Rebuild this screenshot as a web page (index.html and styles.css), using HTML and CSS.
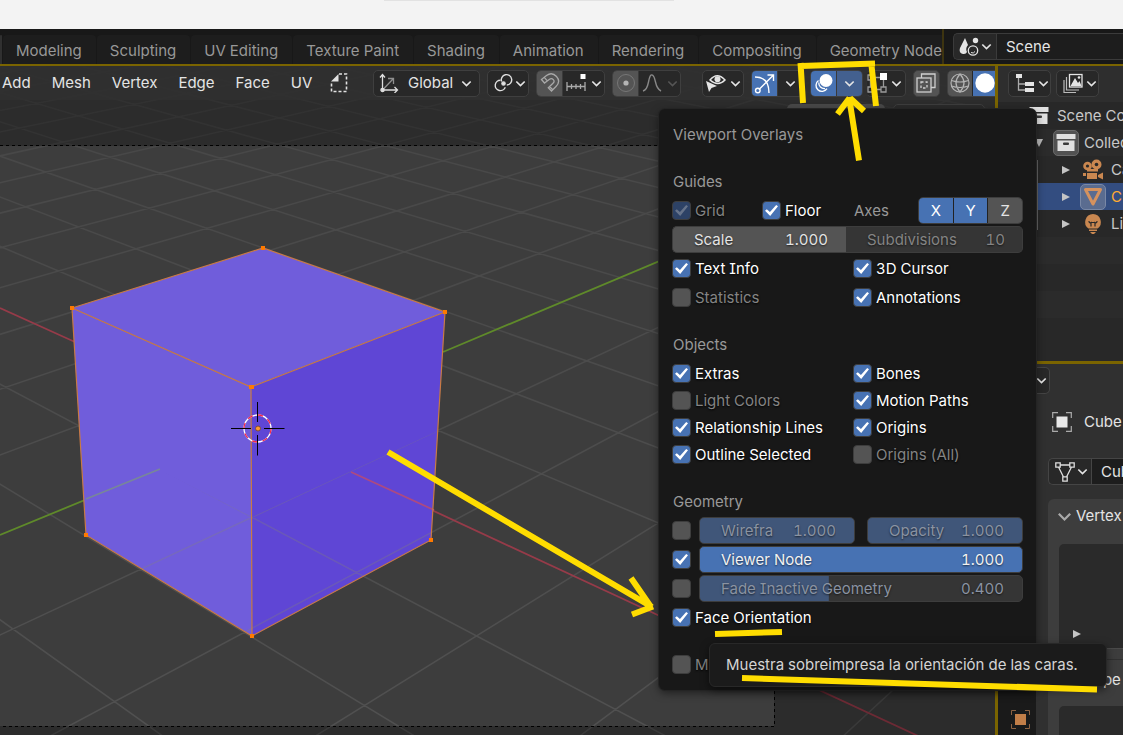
FILE: index.html
```html
<!DOCTYPE html>
<html lang="en">
<head>
<meta charset="utf-8">
<title>Viewport Overlays</title>
<link rel="stylesheet" href="styles.css">
</head>
<body>
<svg class="defs" width="0" height="0" aria-hidden="true">
  <symbol id="chev" viewBox="0 0 10 10"><path d="M1.2 3.2 5 7l3.800-3.800" fill="none" stroke="currentColor" stroke-width="1.500"/></symbol>
  <symbol id="box" viewBox="0 0 20 20"><path d="M0.500 1h19v5h-19z" fill="#e0e0e0"/><path d="M1.500 7.500h17V18h-17z" fill="#e0e0e0"/><rect x="7" y="9.500" width="6" height="2.500" rx="1" fill="#3a3a3a"/></symbol>
  <symbol id="right" viewBox="0 0 10 10"><path d="M1 1v8l8-4z" fill="#c4c4c4"/></symbol>
  <symbol id="down" viewBox="0 0 10 10"><path d="M1 1h8l-4 8z" fill="#b8b8b8"/></symbol>
</svg>

<div class="window-strip"><div class="strip-shadow"></div></div>

<header class="topbar">
  <nav class="tabs">
    <button class="tab active" aria-label="Layout"></button>
    <button class="tab">Modeling</button><button class="tab">Sculpting</button><button class="tab">UV Editing</button><button class="tab">Texture Paint</button><button class="tab">Shading</button><button class="tab">Animation</button><button class="tab">Rendering</button><button class="tab">Compositing</button><button class="tab">Geometry Nodes</button>
  </nav>
  <div class="scene">
    <button class="scene-icon" aria-label="Browse scene">
      <svg width="20" height="20" viewBox="0 0 20 20"><path d="M6 1 1 11q-1.500 5 3 6 3 .5 4-2-2-4 1-7z" fill="#e4e4e4"/><circle cx="16.500" cy="3.500" r="2.700" fill="#e4e4e4"/><circle cx="14" cy="13.500" r="4.700" fill="none" stroke="#e4e4e4" stroke-width="1.300"/><path d="M12 15.500q2.500 1.500 4-1" fill="none" stroke="#e4e4e4"/></svg>
      <svg width="11" height="11"><use href="#chev"/></svg>
    </button>
    <input class="scene-name" aria-label="Scene name" value="Scene">
  </div>
</header>

<main class="workspace">
  <section class="viewport">
    <svg class="canvas" width="100%" height="100%">
      <defs>
        <linearGradient id="fade" gradientUnits="userSpaceOnUse" x1="0" y1="0" x2="0" y2="660"><stop offset="0" stop-color="#fff" stop-opacity=".03"/><stop offset=".15" stop-color="#fff" stop-opacity=".06"/><stop offset="1" stop-color="#fff" stop-opacity=".1"/></linearGradient>
        <clipPath id="front"><path d="M-18 314 252 451 700 243V700H-18z"/></clipPath>
        <clipPath id="cubeclip"><path d="M72 242 263 182 445 246 431 474 252 570 86 469z"/></clipPath>
      </defs>
      <rect width="100%" height="100%" fill="#3d3d3d"/>
      <g id="floor" fill="none" stroke="url(#fade)" stroke-width="1.500"></g>
      <path d="M0 242 75 276M352 407 1000 708" stroke="#963b49" stroke-width="1.800"/>
      <path d="M0 469 160 403M443 286 700 178" stroke="#5f8a2a" stroke-width="1.800"/>
      <path d="M0 0H2000V2000H0V660H774V80H0z" fill="#000" fill-opacity=".28"/>
      <path d="M0 79.500H774.500V660.500H0" fill="none" stroke="#000" stroke-dasharray="3 3"/>
      <path d="M72 242 263 182 445 246 251 321z" fill="#705ddb"/>
      <path d="M72 242 251 321 252 570 86 469z" fill="#705ddb"/>
      <path d="M251 321 445 246 431 474 252 570z" fill="#5f46d5"/>
      <g clip-path="url(#cubeclip)"><g clip-path="url(#front)"><g id="floor-over" fill="none" stroke="#8a8a70" stroke-opacity=".28" stroke-width="1.500"></g></g></g>
      <path d="M86 433 160 403" stroke="#78869a" stroke-width="1.800"/>
      <path d="M351 406 434 444" stroke="#ad4a80" stroke-width="1.800"/>
      <path d="M72 242 263 182 445 246 431 474 252 570 86 469zM72 242 251 321 445 246M251 321 252 570" fill="none" stroke="#c87a45" stroke-width="1.200"/>
      <path d="M70 240h4v4h-4zM261 180h4v4h-4zM443 244h4v4h-4zM249 319h5v4h-5zM84 467h4v4h-4zM250 568h4v4h-4zM429 472h4v4h-4z" fill="#ff7a00"/>
      <circle cx="257.500" cy="362.500" r="13.500" fill="none" stroke="#fff" stroke-width="1.300"/>
      <circle cx="257.500" cy="362.500" r="13.500" fill="none" stroke="#f2274c" stroke-width="1.300" stroke-dasharray="5.300 5.300"/>
      <path d="M231 362.500h20M264 362.500h20.500M257.500 336v20M257.500 369v20.500" stroke="#000"/>
      <circle cx="258" cy="362.500" r="2.500" fill="#ff9a2c" stroke="#7a4a40"/>
    </svg>

    <div class="header">
      <div class="menus"><button>Add</button><button>Mesh</button><button>Vertex</button><button>Edge</button><button>Face</button><button>UV</button></div>
      <svg class="dash-icon" width="18" height="20" viewBox="0 0 18 20"><path d="M9 1h7.500v17.500h-15V9" fill="none" stroke="#e2e2e2" stroke-width="1.600" stroke-dasharray="3 2"/><path d="M8.500 1v7.500H1z" fill="#e2e2e2"/></svg>
      <button class="group g-global">
        <svg width="20" height="20" viewBox="0 0 20 20" fill="none" stroke="#dedede" stroke-width="1.300"><path d="M3.500 17V2M1 4.500 3.500 1.500 6 4.500M3.500 17H18M15.500 14l3 3-3 3"/><path d="M4 16.500 14 6M9 5.500h5.500v5.500" stroke="#8f8f8f"/><circle cx="3.500" cy="17" r="1.600" fill="#ddd"/></svg>
        <span>Global</span>
        <svg width="11" height="11"><use href="#chev"/></svg>
      </button>
      <button class="group g-pivot" aria-label="Pivot point">
        <svg width="20" height="20" viewBox="0 0 20 20" fill="none" stroke="#dedede" stroke-width="1.400"><path d="M7.500 7.200a5.200 5.200 0 1 0 4.800 7"/><path d="M8.600 8.500a5.200 5.200 0 1 1 5.200 3.500"/><circle cx="10.500" cy="10.500" r="1.600" fill="#e4e4e4"/></svg>
        <svg width="11" height="11"><use href="#chev"/></svg>
      </button>
      <div class="group g-snap">
        <button class="on-grey" aria-label="Snap"><svg width="20" height="20" viewBox="0 0 20 20" fill="none" stroke="#a8a8a8" stroke-width="1.300"><path d="M1.500 6.500 6.500 2.500Q12-1.500 16.500 3.500T16 13.500l-4.500 4.500-3.200-3.200 4.700-4.500q2-2 .3-3.700T9.500 6.200L4.500 10zM4.300 4.300l3 3.500M9.500 13.500l3.200 3.200"/></svg></button>
        <button class="part" aria-label="Snap options"><svg width="20" height="20" viewBox="0 0 20 20" fill="none" stroke="#aaa" stroke-width="1.300"><path d="M1 9v9M1 13.500h18M19 9v9M5.500 11v5M10 11v5M14.500 11v5"/><rect x="14.500" y="1" width="5" height="5" fill="#fff" stroke="none"/></svg><svg width="11" height="11"><use href="#chev"/></svg></button>
      </div>
      <div class="group g-prop">
        <button class="on-grey" aria-label="Proportional editing"><svg width="20" height="20" viewBox="0 0 20 20"><circle cx="10" cy="10" r="8.500" fill="none" stroke="#777"/><circle cx="10" cy="10" r="2.600" fill="#b4b4b4"/></svg></button>
        <button class="part dim" aria-label="Falloff"><svg width="20" height="20" viewBox="0 0 20 20" fill="none" stroke="#888" stroke-width="1.400"><path d="M1 18q4-1 5.500-9T10 2q2 0 3.500 7t5.500 9"/></svg><svg width="11" height="11"><use href="#chev"/></svg></button>
      </div>
      <button class="group g-eye" aria-label="Visibility">
        <svg width="22" height="20" viewBox="0 0 22 20"><path d="M5 7q7-8.500 15 0-7 7-15 0z" fill="none" stroke="#e4e4e4" stroke-width="1.500"/><circle cx="12.500" cy="6.200" r="3" fill="#e4e4e4"/><path d="M1 8l3 11 2.500-4L12 13z" fill="#e4e4e4"/></svg>
        <svg width="11" height="11"><use href="#chev"/></svg>
      </button>
      <div class="group g-gizmo">
        <button class="on-blue" aria-label="Gizmos"><svg width="21" height="21" viewBox="0 0 21 21" fill="none" stroke="#fff" stroke-width="1.400"><path d="M1 4q14 0 14 16M5 16.500 19 2.500M13.500 2H19.500V8"/><circle cx="3.800" cy="17.500" r="2.300"/></svg></button>
        <button class="part" aria-label="Gizmo options"><svg width="11" height="11"><use href="#chev"/></svg></button>
      </div>
      <div class="group g-overlay">
        <button class="on-blue" aria-label="Overlays"><svg width="21" height="21" viewBox="0 0 21 21"><circle cx="13" cy="7.500" r="6.500" fill="#fff"/><path d="M5.500 7.500a6 6 0 1 0 8.500 8.200" fill="none" stroke="#fff" stroke-width="1.400"/><path d="M5.800 9.500a5.500 5.500 0 0 0 6.200 6" fill="none" stroke="#fff" stroke-width="1.300"/></svg></button>
        <button class="part blue-dim" aria-label="Overlay options"><svg width="11" height="11"><use href="#chev"/></svg></button>
      </div>
      <button class="group g-mesh" aria-label="Mesh edit overlays">
        <svg width="20" height="20" viewBox="0 0 20 20" fill="none" stroke="#9a9a9a" stroke-width="1.300"><path d="M1 2h5v5H1zM1 14h5v5H1zM14 14h5v5h-5zM3.500 7v7M6 16.500h8M16.500 7v7M6 4.500h7"/><rect x="13" y="0" width="7" height="7" fill="#fff" stroke="none"/></svg>
        <svg width="11" height="11"><use href="#chev"/></svg>
      </button>
      <button class="group g-xray grey" aria-label="X-ray"><svg width="20" height="20" viewBox="0 0 20 20" fill="none" stroke="#cfcfcf" stroke-width="1.300"><path d="M5.500 5V1H19v13.500h-4"/><rect x="1" y="5" width="14" height="14"/><path d="M5 9h6v6H5z" stroke-dasharray="2.500 2"/></svg></button>
      <div class="group g-shade">
        <button class="on-grey" aria-label="Wireframe"><svg width="20" height="20" viewBox="0 0 20 20" fill="none" stroke="#b4b4b4" stroke-width="1.200"><circle cx="10" cy="10" r="9"/><path d="M10 1q-8 9 0 18 8-9 0-18M1.500 7.500q8.500 3 17 0M1.500 13q8.500 3 17 0"/></svg></button>
        <button class="on-blue" aria-label="Solid"><svg width="20" height="20" viewBox="0 0 20 20"><circle cx="10" cy="10" r="9.700" fill="#fff"/></svg></button>
      </div>
    </div>
    <div class="tool-header"><div class="select-modes"></div><div class="options-box"></div></div>
  </section>

  <aside class="sidebar">
    <section class="outliner">
      <div class="side-header">
        <button class="group g-side" aria-label="Editor type"><svg width="20" height="20" viewBox="0 0 20 20"><path d="M1 1h6v4H1zM10 9h9v4h-9zM10 15h9v4h-9z" fill="#e4e4e4"/><path d="M3.500 5v12H10M3.500 11H10" fill="none" stroke="#aaa" stroke-width="1.300"/></svg><svg width="11" height="11"><use href="#chev"/></svg></button>
        <button class="group g-side" aria-label="Display mode"><svg width="20" height="20" viewBox="0 0 20 20"><path d="M3.500 4v13H16M1 7v12.500H13" fill="none" stroke="#bbb" stroke-width="1.200"/><rect x="6.500" y="1.500" width="12.500" height="12.500" fill="none" stroke="#e4e4e4" stroke-width="1.300"/><path d="M7.500 13 12 5l3 5 1.500-2 2 5z" fill="#e4e4e4"/><circle cx="16" cy="4.500" r="1.300" fill="#e4e4e4"/></svg><svg width="11" height="11"><use href="#chev"/></svg></button>
      </div>
      <div class="tree">
        <div class="row"><span class="ic"><svg width="20" height="20"><use href="#box"/></svg></span><span>Scene Collection</span></div>
        <div class="row"><span class="tw"><svg width="10" height="10"><use href="#down"/></svg></span><span class="ic lit"><svg width="20" height="20"><use href="#box"/></svg></span><span>Collection</span></div>
        <div class="row deep"><span class="tw"><svg width="10" height="10"><use href="#right"/></svg></span><span class="ic"><svg width="22" height="22" viewBox="0 0 22 22"><g fill="#c98750"><circle cx="5.500" cy="7" r="4.300"/><circle cx="14.500" cy="5.500" r="5"/><path d="M5 10h11v2.500H5zM5 14h10v6H5zM1 14h3v3H1zM16 16l5-2.500v7L16 18z"/></g><circle cx="5.500" cy="7" r="1.600" fill="#282828"/><circle cx="14.500" cy="5.500" r="1.800" fill="#282828"/></svg></span><span>Camera</span></div>
        <div class="row deep selected"><span class="tw"><svg width="10" height="10"><use href="#right"/></svg></span><span class="ic lit"><svg width="20" height="20" viewBox="0 0 20 20"><path d="M2.500 2.500h15L10 17z" fill="none" stroke="#d5925e" stroke-width="3" stroke-linejoin="round"/></svg></span><span>Cube</span></div>
        <div class="row deep"><span class="tw"><svg width="10" height="10"><use href="#right"/></svg></span><span class="ic"><svg width="20" height="20" viewBox="0 0 20 20"><path d="M10 0a8 8 0 0 1 4.500 14.500h-9A8 8 0 0 1 10 0zM6 15.500h8v1.500H6zM7 18h6l-2 2H9z" fill="#c98750"/><path d="M6 7q0 2.500 2 1.500v4M14 7q0 2.500-2 1.500v4M8 8.500h4" fill="none" stroke="#282828" stroke-width="1.200"/></svg></span><span>Light</span></div>
        <div class="row"></div><div class="row"></div><div class="row"></div><div class="row"></div>
        <div class="tree-line"></div>
      </div>
    </section>
    <section class="properties">
      <div class="prop-tabs"><svg width="19" height="19" viewBox="0 0 19 19"><rect x="4" y="4" width="11" height="11" fill="#c27e48"/><path d="M.5 5V.5H5M14 .5h4.500V5M18.500 14v4.500H14M5 18.500H.5V14" fill="none" stroke="#8d6242"/></svg></div>
      <div class="prop-body">
        <button class="cut" aria-label="Editor type"><svg width="11" height="11"><use href="#chev"/></svg></button>
        <div class="crumb"><svg width="20" height="20" viewBox="0 0 20 20"><rect x="4.500" y="4.500" width="11" height="11" fill="#e8e8e8"/><path d="M.7 6V.7H6M14 .7h5.300V6M19.300 14v5.300H14M6 19.300H.7V14" fill="none" stroke="#aaa" stroke-width="1.200"/></svg><span>Cube</span></div>
        <div class="datablock"><button aria-label="Browse mesh"><svg width="20" height="20" viewBox="0 0 20 20" fill="none" stroke="#dedede" stroke-width="1.300"><path d="M5 3h10M3.500 5 8.500 15M16.500 5 11.500 15M.8.800h4.400v4.400H.8zM14.800.800h4.400v4.400h-4.400zM7.800 14.800h4.400v4.400H7.800z"/></svg><svg width="11" height="11"><use href="#chev"/></svg></button><input value="Cube" aria-label="Mesh name"></div>
        <div class="panel first">
          <div class="panel-title"><svg width="15" height="15"><use href="#chev"/></svg><span>Vertex Groups</span></div>
          <div class="list"><svg width="10" height="10"><use href="#right"/></svg></div>
          <div class="grip"></div>
        </div>
        <div class="panel shapes">
          <div class="panel-title"><svg width="15" height="15"><use href="#chev"/></svg><span>Shape Keys</span></div>
          <div class="list"></div>
        </div>
      </div>
    </section>
  </aside>
</main>

<section class="popover" aria-label="Viewport Overlays">
  <div class="title">Viewport Overlays</div>
  <div class="section">
    <div class="title">Guides</div>
    <div class="line">
      <label class="check muted quarter"><input type="checkbox" checked disabled>Grid</label>
      <label class="check quarter"><input type="checkbox" checked>Floor</label>
      <span class="axes">Axes</span>
      <div class="xyz"><button class="sel">X</button><button class="sel">Y</button><button>Z</button></div>
    </div>
    <div class="line joined">
      <div class="field scale"><label for="f1">Scale</label><input id="f1" value="1.000"></div>
      <div class="field off"><label for="f2">Subdivisions</label><input id="f2" value="10"></div>
    </div>
    <div class="line two"><label class="check"><input type="checkbox" checked>Text Info</label><label class="check"><input type="checkbox" checked>3D Cursor</label></div>
    <div class="line two"><label class="check muted"><input type="checkbox">Statistics</label><label class="check"><input type="checkbox" checked>Annotations</label></div>
  </div>
  <div class="section">
    <div class="title">Objects</div>
    <div class="tight">
      <div class="line two"><label class="check"><input type="checkbox" checked>Extras</label><label class="check"><input type="checkbox" checked>Bones</label></div>
      <div class="line two"><label class="check muted"><input type="checkbox">Light Colors</label><label class="check"><input type="checkbox" checked>Motion Paths</label></div>
      <div class="line two"><label class="check"><input type="checkbox" checked>Relationship Lines</label><label class="check"><input type="checkbox" checked>Origins</label></div>
      <div class="line two"><label class="check"><input type="checkbox" checked>Outline Selected</label><label class="check muted"><input type="checkbox">Origins (All)</label></div>
    </div>
  </div>
  <div class="section">
    <div class="title">Geometry</div>
    <div class="line slider-line"><input type="checkbox" aria-label="Wireframe">
      <div class="sliders"><div class="field off slide"><label for="f3">Wirefra</label><input id="f3" value="1.000"></div><div class="field off slide"><label for="f4">Opacity</label><input id="f4" value="1.000"></div></div></div>
    <div class="line slider-line"><input type="checkbox" checked aria-label="Viewer node"><div class="field slide full"><label for="f5">Viewer Node</label><input id="f5" value="1.000"></div></div>
    <div class="line slider-line"><input type="checkbox" aria-label="Fade inactive"><div class="field off slide" style="--fill:40%"><label for="f6">Fade Inactive Geometry</label><input id="f6" value="0.400"></div></div>
    <div class="line"><label class="check"><input type="checkbox" checked>Face Orientation</label></div>
  </div>
  <div class="section"><div class="line"><label class="check muted"><input type="checkbox">M</label></div></div>
</section>

<div class="tooltip" role="tooltip">Muestra sobreimpresa la orientación de las caras.</div>

<svg class="marks" width="100%" height="100%" fill="none" stroke="#ffdd00" stroke-width="6" aria-hidden="true">
  <path d="M800.500 63 803 103M801 66 875 63.500M871 61 876 106M849 97 859 160.500M849.500 98 837.500 114M850 98 864 111"/>
  <path d="M388 452 652 607M631 578 651 607M632 614.500 653 606.500"/>
  <path d="M715 634 782 632M742 678 1097 689.500"/>
</svg>
<script src="grid.js"></script>
</body>
</html>
```

FILE: grid.js
```js
// Projects the one-unit floor grid onto the viewport canvas.
const project = (u, v) => {
  const w = 1 - 0.0571 * u - 0.05545 * v;
  return [(258 + 72.4 * u - 106.8 * v) / w, (428 + 16.34 * u + 14.7 * v) / w - 66];
};
const near = 0.25;
const far = -45;
let d = "";
for (let k = far; k <= 12; k++) {
  if (k === 0) continue;
  const vMax = (1 - near - 0.0571 * k) / 0.05545;
  const uMax = (1 - near - 0.05545 * k) / 0.0571;
  d += "M" + project(k, far) + "L" + project(k, vMax);
  d += "M" + project(far, k) + "L" + project(uMax, k);
}
for (const id of ["floor", "floor-over"]) {
  const path = document.createElementNS("http://www.w3.org/2000/svg", "path");
  path.setAttribute("d", d);
  document.getElementById(id).append(path);
}
```

FILE: styles.css
```css
* { box-sizing: border-box; }
body {
  margin: 0;
  height: 100vh;
  display: flex;
  flex-direction: column;
  position: relative;
  overflow: hidden;
  background: #181818;
  color: #e4e4e4;
  font: 15px/20px Inter, "Liberation Sans", sans-serif;
  font-feature-settings: "cv08", "tnum";
  white-space: nowrap;
}
.defs { position: absolute; }
svg { flex: none; display: block; }
button, input { font: inherit; font-feature-settings: inherit; color: inherit; border: 0; padding: 0; margin: 0; background: none; }
button { display: flex; align-items: center; }

.window-strip { flex: none; height: 29px; background: #f3f3f3; }
.strip-shadow { width: 290px; height: 1px; margin-left: 384px; background: #e2e2e2; }

.topbar { flex: none; height: 37px; display: flex; align-items: flex-end; border-bottom: 2px solid #7a6400; }
.tabs { flex: 1; min-width: 0; align-self: stretch; display: flex; align-items: flex-end; gap: 1px; overflow: hidden; border-right: 2px solid #3d3410; }
.tab { flex: none; height: 29px; padding: 2px 14px 0 13px; background: #1d1d1d; color: #989898; border-radius: 4px 4px 0 0; }
.tab.active { width: 2px; padding: 0; background: #303030; }
.scene { width: 170px; height: 27px; margin: 0 0 4px 9px; display: flex; border: 1px solid #3b3b3b; border-right: 0; border-radius: 5px 0 0 5px; background: #282828; }
.scene-icon { width: 42px; padding-left: 5px; gap: 2px; }
.scene-name { flex: 1; min-width: 0; padding-left: 9px; background: #1d1d1d; border-left: 1px solid #3b3b3b; }

.workspace { flex: 1; min-height: 0; display: grid; grid-template-columns: minmax(0, 1fr) 128px; grid-template-rows: minmax(0, 1fr); }
.viewport { position: relative; overflow: hidden; }
.canvas { position: absolute; inset: 0; }
.header { position: relative; height: 34px; display: flex; align-items: center; background: rgba(48, 48, 48, .85); overflow: hidden; }
.menus { flex: none; display: flex; gap: 21px; padding-left: 2px; width: 330px; }
.dash-icon { margin-right: 25px; }
.group { flex: none; height: 27px; display: flex; align-items: center; border: 1px solid #3f3f3f; border-radius: 5px; background: #282828; overflow: hidden; margin-right: 7px; }
.group > button { height: 100%; justify-content: center; }
.group .part { flex: 1; gap: 5px; border-left: 1px solid #3a3a3a; }
.on-grey { width: 25px; background: #545454; }
.on-blue { width: 25px; background: #4772b3; }
.group .blue-dim { background: #43608f; }
.dim { color: #555; }
.grey { background: #545454; }
.g-global { width: 107px; padding: 0 7px 0 5px; }
.g-global span { flex: 1; text-align: left; padding-left: 9px; }
.g-pivot { width: 42px; padding-left: 5px; gap: 2px; }
.g-snap, .g-prop { width: 69px; }
.g-prop { margin-right: 21px; }
.g-eye { width: 42px; padding-left: 2px; gap: 3px; }
.g-gizmo { width: 52px; }
.g-overlay { width: 53px; margin-right: 3px; }
.g-mesh { width: 40px; border-left-color: #303030; gap: 4px; }
.g-xray { width: 27px; padding-left: 2px; }
.g-shade { width: 56px; margin-right: 0; }
.g-shade .on-blue { width: 30px; padding-right: 5px; margin-left: 1px; }
.tool-header { position: relative; display: flex; justify-content: flex-end; gap: 8px; padding: 4px 10px 0 0; }
.select-modes { width: 98px; height: 27px; border-radius: 5px; background: #484848; }
.options-box { width: 92px; height: 27px; border-radius: 5px; border: 1px solid #3d3d3d; background: #2a2a2a; }

.sidebar { min-width: 0; display: flex; flex-direction: column; border-left: 3px solid #7a6400; background: #303030; overflow: hidden; }
.outliner { flex: none; height: 298px; background: #282828; border-bottom: 3px solid #7a6400; overflow: hidden; }
.side-header { height: 36px; display: flex; align-items: center; padding: 0 0 2px 10px; background: #2e2e2e; }
.g-side { width: 43px; padding-left: 6px; gap: 3px; margin-right: 5px; }
.tree { position: relative; }
.row { height: 27px; padding-left: 28px; display: flex; align-items: center; color: #c8c8c8; background: #282828; }
.row:nth-child(even) { background: #2b2b2b; }
.row.deep { padding-left: 55px; }
.row.selected { background: #334d80; color: #ffaa33; }
.ic { width: 26px; height: 26px; margin-right: 5px; display: flex; align-items: center; justify-content: center; flex: none; border-radius: 5px; }
.ic.lit { background: #515151; border: 1px solid #6a6a6a; }
.selected .ic.lit { background: #5a6c90; border-color: #7988a6; }
.tw { width: 27px; flex: none; padding-left: 8px; }
.tree-line { position: absolute; left: 39px; top: 58px; width: 1px; height: 70px; background: #666; }

.properties { flex: 1; display: flex; min-height: 0; }
.prop-tabs { width: 38px; flex: none; background: #1a1a1a; display: flex; align-items: flex-end; justify-content: center; padding: 0 0 6px 6px; }
.prop-body { flex: 1; min-width: 0; display: flex; flex-direction: column; overflow: hidden; }
.cut { height: 27px; width: 14px; margin-top: 3px; border: 1px solid #454545; border-left: 0; border-radius: 0 5px 5px 0; background: #282828; flex: none; }
.crumb { display: flex; align-items: center; gap: 12px; margin-top: 18px; padding-left: 16px; height: 20px; flex: none; }
.datablock { height: 27px; flex: none; margin: 26px 0 0 12px; display: flex; background: #282828; border: 1px solid #454545; border-radius: 5px 0 0 5px; border-right: 0; overflow: hidden; }
.datablock button { width: 42px; flex: none; padding-left: 6px; gap: 2px; }
.datablock input { flex: 1; min-width: 0; padding-left: 9px; background: #1d1d1d; border-left: 1px solid #454545; }
.panel { margin-left: 12px; background: #3d3d3d; flex: none; }
.panel.first { margin-top: 14px; height: 164px; border-radius: 6px 0 0 0; }
.panel-title { display: flex; align-items: center; gap: 4px; height: 34px; padding-left: 9px; }
.panel-title svg { color: #aaa; }
.list { height: 104px; margin: 11px 0 0 11px; padding: 85px 0 0 13px; background: #2a2a2a; border-radius: 5px 0 0 0; }
.grip { height: 12px; margin-left: 11px; border-top: 1px solid #4a4a4a; border-bottom: 1px solid #303030; }
.shapes .list { margin-top: 9px; }

.popover { position: absolute; left: 659px; top: 109px; width: 377px; padding: 12px; display: flex; flex-direction: column; gap: 20px; background: #181818; border-radius: 6px; box-shadow: 0 0 0 1px #242424, 0 3px 8px rgba(0, 0, 0, .5); color: #fff; }
.popover > * { margin: 0 1px; }
.title { height: 27px; line-height: 27px; color: #989898; padding-left: 1px; }
.section { display: flex; flex-direction: column; gap: 2px; }
.line { height: 27px; display: flex; align-items: center; }
.two > * { flex: 0 0 181px; }
.check { display: flex; align-items: center; gap: 4px; text-shadow: 0 1px 2px #000; }
.muted { color: #848484; }
.quarter { flex: 0 0 90px; }
input[type="checkbox"] { appearance: none; flex: none; width: 19px; height: 19px; border: 1px solid #3d3d3d; border-radius: 4px; background: #545454; }
input[type="checkbox"]:checked { background: #4772b3; display: grid; place-items: center; }
input[type="checkbox"]:checked::before { content: ""; width: 13px; height: 11px; background: #fff; clip-path: polygon(0 52%, 14% 38%, 38% 64%, 86% 0, 100% 12%, 40% 100%); }
input[type="checkbox"]:checked:disabled { background: #2d4266; }
input[type="checkbox"]:checked:disabled::before { background: #66738a; }
.axes { flex: 1; color: #989898; padding-left: 2px; }
.xyz { width: 105px; height: 27px; display: flex; gap: 1px; border: 1px solid #3d3d3d; border-radius: 5px; overflow: hidden; background: #222; }
.xyz button { flex: 1; justify-content: center; background: #545454; color: #e4e4e4; }
.xyz .sel { background: #4772b3; color: #fff; }
.field { flex: 1; min-width: 0; height: 27px; display: flex; align-items: center; justify-content: space-between; padding: 0 18px 0 21px; background: #545454; border: 1px solid #3d3d3d; border-radius: 5px; color: #e4e4e4; text-shadow: 0 1px 2px rgba(0, 0, 0, .6); }
.field input { width: 48px; flex: none; text-align: right; text-shadow: inherit; }
.joined .field { border-radius: 0 5px 5px 0; border-left: 0; }
.joined .scale { flex: 0 0 174px; border-radius: 5px 0 0 5px; border-right: 0; border-left: 1px solid #3d3d3d; }
.joined .off, .off { background-color: #353535; color: #848484; }
.slider-line { gap: 8px; }
.sliders { flex: 1; display: flex; gap: 12px; }
.slide { background-image: linear-gradient(#405679, #405679); background-size: var(--fill, 100%) 100%; background-repeat: no-repeat; }
.off.slide { color: #8a93a2; }
.full { background: #4772b3; color: #f2f2f2; }

.tooltip { position: absolute; left: 709px; top: 643px; padding: 11px 28px 11px 16px; background: #1b1b1b; border: 1px solid #282828; border-radius: 6px; box-shadow: 0 3px 8px rgba(0, 0, 0, .5); color: #d4d4d4; }
.marks { position: absolute; inset: 0; pointer-events: none; }
```
